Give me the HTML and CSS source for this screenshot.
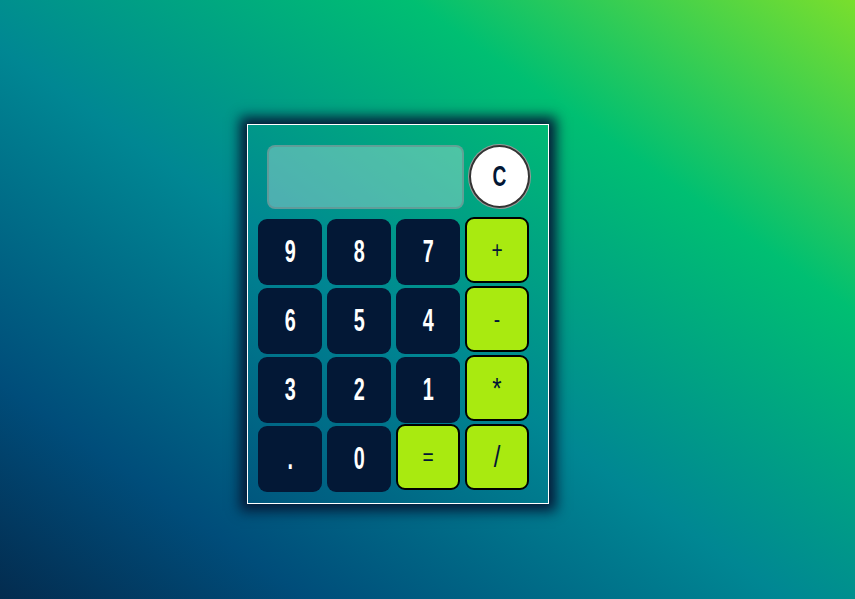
FILE: index.html
```html
<!DOCTYPE html>
<html>
<head>
<meta charset="utf-8">
<link rel="stylesheet" href="styles.css">
</head>
<body>
<div class="calc">
  <div class="top">
    <div class="display"></div>
    <button class="clear"><span class="glyph">C</span></button>
  </div>
  <div class="keys">
    <button class="num"><span class="glyph">9</span></button>
    <button class="num"><span class="glyph">8</span></button>
    <button class="num"><span class="glyph">7</span></button>
    <button class="op"><span class="glyph">+</span></button>
    <button class="num"><span class="glyph">6</span></button>
    <button class="num"><span class="glyph">5</span></button>
    <button class="num"><span class="glyph">4</span></button>
    <button class="op"><span class="glyph">-</span></button>
    <button class="num"><span class="glyph">3</span></button>
    <button class="num"><span class="glyph">2</span></button>
    <button class="num"><span class="glyph">1</span></button>
    <button class="op big"><span class="glyph">*</span></button>
    <button class="num"><span class="glyph">.</span></button>
    <button class="num"><span class="glyph">0</span></button>
    <button class="op"><span class="glyph">=</span></button>
    <button class="op big"><span class="glyph">/</span></button>
  </div>
</div>
</body>
</html>
```
FILE: styles.css
```css
html, body {
  margin: 0;
  height: 100%;
}
body {
  background: linear-gradient(to right top, #051937 -10%, #004d7a 18%, #008793 46%, #00bf72 74%, #a8eb12 110%);
  overflow: hidden;
}
.calc {
  margin: 124px 0 0 247px;
  width: 300px;
  height: 378px;
  border: 1px solid #ffffff;
  box-shadow: 0 0 12px 7px #051937;
  box-sizing: content-box;
}
.top {
  display: flex;
  align-items: flex-start;
  padding: 20px 0 0 19px;
  gap: 5px;
  height: 74px;
}
.display {
  width: 197px;
  height: 64px;
  box-sizing: border-box;
  border-radius: 8px;
  border: 2px solid rgba(110, 140, 140, 0.6);
  background: rgba(255, 255, 255, 0.3);
}
.glyph {
  display: inline-block;
  transform: scale(0.66, 1.04);
}
.clear {
  width: 61px;
  height: 63px;
  border-radius: 50%;
  background: #ffffff;
  border: 2px solid #333;
  box-shadow: 0 0 0 1px #999;
  color: #021635;
  font-family: "Liberation Sans", sans-serif;
  font-weight: bold;
  font-size: 29px;
  padding: 0;
  display: flex;
  align-items: center;
  justify-content: center;
}
.keys {
  display: grid;
  grid-template-columns: repeat(4, 64px);
  grid-auto-rows: 66px;
  column-gap: 5px;
  row-gap: 3px;
  padding: 0 0 0 10px;
}
.keys button {
  border-radius: 9px;
  padding: 0;
  display: flex;
  align-items: center;
  justify-content: center;
  font-family: "Liberation Sans", sans-serif;
}
.num {
  background: #031836;
  border: none;
  color: #ffffff;
  font-weight: bold;
  font-size: 30px;
}
.op {
  background: #a9ea10;
  border: 2px solid #000;
  color: #021635;
  font-size: 24px;
  margin: -2px 0 0 0;
  width: 64px;
  height: 66px;
}
.op .glyph {
  transform: scale(0.8, 1);
}
.op.big {
  font-size: 30px;
}
```
